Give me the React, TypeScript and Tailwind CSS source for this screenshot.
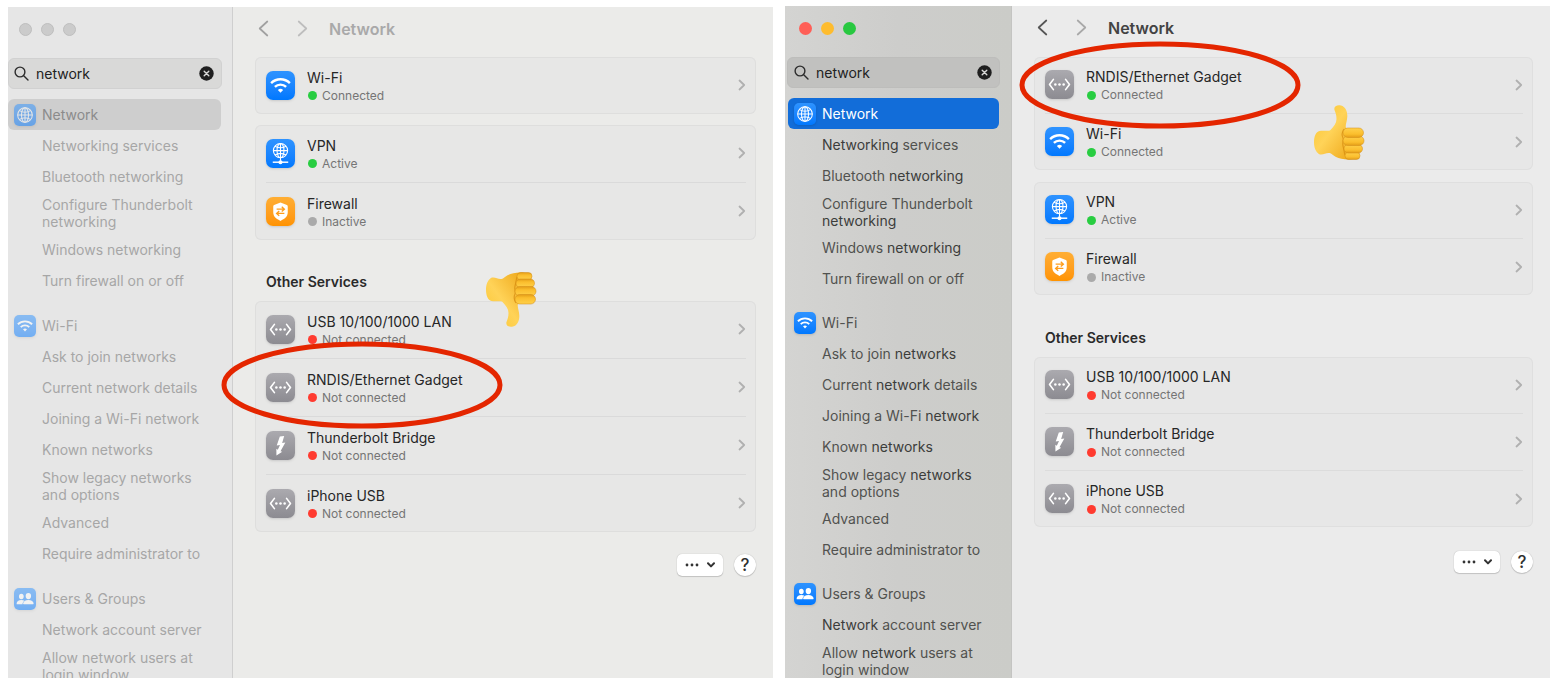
import type { ReactNode } from 'react'
import clsx from 'clsx'

type Status = 'Connected' | 'Active' | 'Inactive' | 'Not connected'
type IconKind = 'wifi' | 'vpn' | 'firewall' | 'ethernet' | 'thunderbolt' | 'globe' | 'users'

interface Service {
  name: string
  icon: IconKind
  status: Status
  circled?: boolean
}

interface SearchGroup {
  title: string
  icon: IconKind
  items: string[]
}

// Words between asterisks are the ones the search matched
const searchGroups: SearchGroup[] = [
  {
    title: 'Network',
    icon: 'globe',
    items: [
      '*Networking* services',
      'Bluetooth *networking*',
      'Configure Thunderbolt|*networking*',
      'Windows *networking*',
      'Turn firewall on or off',
    ],
  },
  {
    title: 'Wi-Fi',
    icon: 'wifi',
    items: [
      'Ask to join *networks*',
      'Current *network* details',
      'Joining a Wi-Fi *network*',
      'Known *networks*',
      'Show legacy *networks*|and options',
      'Advanced',
      'Require administrator to',
    ],
  },
  {
    title: 'Users & Groups',
    icon: 'users',
    items: ['*Network* account server', 'Allow *network* users at|login window'],
  },
]

const wifi: Service = { name: 'Wi-Fi', icon: 'wifi', status: 'Connected' }
const vpn: Service = { name: 'VPN', icon: 'vpn', status: 'Active' }
const firewall: Service = { name: 'Firewall', icon: 'firewall', status: 'Inactive' }
const lan: Service = { name: 'USB 10/100/1000 LAN', icon: 'ethernet', status: 'Not connected' }
const bridge: Service = { name: 'Thunderbolt Bridge', icon: 'thunderbolt', status: 'Not connected' }
const iphone: Service = { name: 'iPhone USB', icon: 'ethernet', status: 'Not connected' }
const gadget: Service = { name: 'RNDIS/Ethernet Gadget', icon: 'ethernet', status: 'Not connected', circled: true }

export default function App() {
  return (
    <div className="flex h-screen gap-3 bg-white pt-[6px] pr-[10px] pb-[9px] pl-2 font-['Inter','Liberation_Sans',sans-serif]">
      <SettingsWindow
        active={false}
        groups={[[wifi], [vpn, firewall]]}
        others={[lan, gadget, bridge, iphone]}
      />
      <SettingsWindow
        active
        groups={[[{ ...gadget, status: 'Connected' }, wifi], [vpn, firewall]]}
        others={[lan, bridge, iphone]}
      />
    </div>
  )
}

interface SettingsWindowProps {
  active: boolean
  groups: Service[][]
  others: Service[]
}

function SettingsWindow({ active, groups, others }: SettingsWindowProps) {
  return (
    <section
      aria-label={active ? 'Gadget connected' : 'Gadget not connected'}
      className={clsx('flex min-w-0 flex-1 overflow-hidden', !active && 'mt-px')}
    >
      <Sidebar active={active} />

      <main className={clsx('relative min-w-0 flex-1 pr-[17px] pl-[22px]', active ? 'bg-[#ebebeb]' : 'bg-[#ebebe9]')}>
        {/* Toolbar */}
        <header className={clsx('flex items-center', active ? 'h-[51px] pb-2' : 'h-[50px] pb-[7px]')}>
          <button aria-label="Back" className={clsx('ml-[3px]', active ? 'text-[#555555]' : 'text-[#a0a0a0]')}>
            <NavChevron />
          </button>
          <button aria-label="Forward" className={clsx('ml-[28px] rotate-180', active ? 'text-[#a8a8a8]' : 'text-[#bdbdbd]')}>
            <NavChevron />
          </button>
          <h1 className={clsx('ml-[21px] text-[16px] font-semibold', active ? 'text-[#434343]' : 'text-[#a9a9a9]')}>Network</h1>
        </header>

        <div className={clsx('flex flex-col', active ? 'gap-3' : 'gap-[11px]')}>
          {groups.map((services) => (
            <ServiceCard key={services[0].name} services={services} active={active} />
          ))}
        </div>

        <h2 className={clsx('pb-[9px] pl-[11px] text-[14px] leading-5 font-semibold text-[#2a2a2a]', active ? 'pt-[33px]' : 'pt-[32px]')}>
          Other Services
        </h2>
        <ServiceCard services={others} active={active} />

        <div className={clsx('flex justify-end gap-[11px]', active ? 'mt-6' : 'mt-[22px]')}>
          <button
            aria-label="More options"
            className="flex h-[22px] w-[46px] items-center justify-center gap-2 rounded-[5px] bg-white text-[#333333] shadow-[0_0_1px_rgba(0,0,0,0.3),0_1px_1px_rgba(0,0,0,0.15)]"
          >
            <svg width="14" height="4" viewBox="0 0 14 4" fill="currentColor">
              <circle cx="2" cy="2" r="1.4" />
              <circle cx="7" cy="2" r="1.4" />
              <circle cx="12" cy="2" r="1.4" />
            </svg>
            <svg width="8" height="6" viewBox="0 0 8 6" fill="none" stroke="currentColor" strokeWidth="2" strokeLinecap="round" strokeLinejoin="round">
              <path d="M1 1.3 4 4.4 7 1.3" />
            </svg>
          </button>
          <button
            aria-label="Help"
            className="h-[22px] w-[22px] rounded-full bg-white text-[17px] leading-[22px] font-medium text-[#2f2f2f] shadow-[0_0_1px_rgba(0,0,0,0.3),0_1px_1px_rgba(0,0,0,0.15)]"
          >
            ?
          </button>
        </div>

        {active ? <Thumb className="absolute top-[99px] left-[301px]" /> : <Thumb className="absolute top-[264px] left-[252px] -scale-y-100" />}
      </main>
    </section>
  )
}

function Sidebar({ active }: { active: boolean }) {
  const light = 'h-[13px] w-[13px] rounded-full'
  const dimmed = 'border border-[#bebebe] bg-[#cbcbcb]'

  return (
    <aside
      className={clsx(
        'shrink-0 border-r',
        active
          ? 'w-[227px] border-[#c4c4c2] bg-linear-to-r from-[#d4d4d2] via-[#cdcdcb] to-[#cbccc8] pr-3 pl-[3px]'
          : 'w-[225px] border-[#cfcfcf] bg-[#e6e6e6] pr-[11px]',
      )}
    >
      {/* Window controls */}
      <div className="flex h-[51px] gap-[9px] pt-[16px] pl-[11px]">
        <button aria-label="Close" className={clsx(light, active ? 'bg-[#ff5f57]' : dimmed)} />
        <button aria-label="Minimize" className={clsx(light, active ? 'bg-[#febc2e]' : dimmed)} />
        <button aria-label="Zoom" className={clsx(light, active ? 'bg-[#28c840]' : dimmed)} />
      </div>

      <label
        className={clsx(
          '-mr-px flex h-[31px] items-center rounded-md border pr-[7px]',
          active ? '-ml-px border-[#bdbdbb] bg-[#c1c1bf] pl-[6px]' : 'border-[#d1d1d1] bg-[#d9d9d8] pl-[5px]',
        )}
      >
        <svg width="15" height="15" viewBox="0 0 15 15" fill="none" stroke="#2c2c2c" strokeWidth="1.4" strokeLinecap="round">
          <circle cx="6" cy="6" r="4.9" />
          <path d="m9.7 9.7 4.3 4.3" />
        </svg>
        <input
          type="text"
          aria-label="Search"
          defaultValue="network"
          className="ml-[7px] min-w-0 flex-1 bg-transparent text-[14px] text-[#222222] outline-none"
        />
        <button aria-label="Clear search">
          <svg width="15" height="15" viewBox="0 0 15 15">
            <circle cx="7.5" cy="7.5" r="7.2" fill="#1f1f1f" />
            <path d="m5.2 5.2 4.6 4.6M9.8 5.2 5.2 9.8" stroke="#d9d9d8" strokeWidth="1.4" strokeLinecap="round" />
          </svg>
        </button>
      </label>

      <nav className={clsx('flex flex-col pt-[10px] text-[14px]', active ? 'gap-[13px] text-[#51524f]' : 'gap-[14px] text-[#a6a6a6]')}>
        {searchGroups.map((group, i) => (
          <ul key={group.title}>
            <li>
              <a
                href="#"
                className={clsx(
                  'flex h-[31px] items-center gap-[6px] rounded-md pl-[6px]',
                  i === 0 && (active ? 'bg-[#126dd9] text-white' : 'bg-[#cecece] text-[#8b8b8b]'),
                )}
              >
                <span className={clsx('flex', !active && 'opacity-50')}>
                  <ServiceIcon kind={group.icon} size={22} />
                </span>
                {group.title}
              </a>
            </li>
            {group.items.map((item) => (
              <SearchItem key={item} item={item} active={active} />
            ))}
          </ul>
        ))}
      </nav>
    </aside>
  )
}

function SearchItem({ item, active }: { item: string; active: boolean }) {
  const lines = item.split('|')

  return (
    <li>
      <a
        href="#"
        className={clsx(
          'flex flex-col justify-center pl-[34px] leading-[17px] whitespace-nowrap',
          lines.length === 1 ? 'h-[31px]' : active ? 'h-[41px]' : 'h-[42px]',
        )}
      >
        {lines.map((line) => (
          <span key={line}>
            {line.split('*').map((part, i) => (
              <span key={i} className={clsx(i % 2 === 1 && active && 'text-[#3c3d3b]')}>
                {part}
              </span>
            ))}
          </span>
        ))}
      </a>
    </li>
  )
}

function ServiceCard({ services, active }: { services: Service[]; active: boolean }) {
  return (
    <ul
      className={clsx(
        'divide-y rounded-md pr-[10px] pl-[11px] inset-ring',
        active ? 'divide-[#dcdcdc] bg-[#e7e7e7] inset-ring-[#dfdfdf]' : 'divide-[#dadada] bg-[#e7e7e6] inset-ring-[#dededd]',
      )}
    >
      {services.map((service) => (
        <li key={service.name} className="relative">
          <button className={clsx('flex w-full items-center pb-px text-left', active ? 'h-[56px]' : 'h-[57px]')}>
            <ServiceIcon kind={service.icon} size={29} />
            <span className="flex min-w-0 flex-1 flex-col pt-[3px] pl-[12px]">
              <span className="truncate text-[14px] leading-[18px] text-[#262626]">{service.name}</span>
              <span className="flex items-center gap-[5px] text-[12px] leading-[18px] text-[#757575]">
                <StatusDot status={service.status} />
                {service.status}
              </span>
            </span>
            <svg width="8" height="12" viewBox="0 0 8 12" fill="none" stroke="#b0b0b0" strokeWidth="1.8" strokeLinecap="round" strokeLinejoin="round">
              <path d="m1.5 1.5 4.7 4.5-4.7 4.5" />
            </svg>
          </button>
          {service.circled && (
            <svg
              className={clsx('pointer-events-none absolute z-10', active ? '-top-[16px] -left-[26px]' : '-top-[18px] -left-[45px]')}
              width="282"
              height="88"
              viewBox="0 0 282 88"
              fill="none"
              stroke="#e42600"
              strokeWidth="5"
            >
              <ellipse cx="141" cy="44" rx="138" ry="41" />
            </svg>
          )}
        </li>
      ))}
    </ul>
  )
}

function StatusDot({ status }: { status: Status }) {
  return (
    <span
      className={clsx(
        'ml-px h-[9px] w-[9px] rounded-full',
        status === 'Not connected' ? 'bg-[#ff3b30]' : status === 'Inactive' ? 'bg-[#aaaaaa]' : 'bg-[#28cd41]',
      )}
    />
  )
}

function NavChevron() {
  return (
    <svg width="11" height="17" viewBox="0 0 11 17" fill="none" stroke="currentColor" strokeWidth="1.7" strokeLinecap="round" strokeLinejoin="round">
      <path d="M9.3 1.5 1.7 8.5l7.6 7" />
    </svg>
  )
}

const tileColors: Record<IconKind, string> = {
  wifi: 'from-[#2e93ff] to-[#0078fe]',
  vpn: 'from-[#2e93ff] to-[#0078fe]',
  globe: 'from-[#2e93ff] to-[#0078fe]',
  users: 'from-[#2e93ff] to-[#0078fe]',
  firewall: 'from-[#ffae33] to-[#ff9300]',
  ethernet: 'from-[#abaaaf] to-[#8c8b91]',
  thunderbolt: 'from-[#abaaaf] to-[#8c8b91]',
}

// All glyphs are drawn on a 30 x 30 tile
const glyphs: Record<IconKind, ReactNode> = {
  wifi: (
    <g fill="none" stroke="#fff" strokeWidth="2.5">
      <path d="M5.3 12.6a13.8 13.8 0 0 1 19.4 0" />
      <path d="M9.2 16.5a8.2 8.2 0 0 1 11.6 0" />
      <path d="m15 22.4-2.7-2.8a3.9 3.9 0 0 1 5.4 0Z" fill="#fff" stroke="none" />
    </g>
  ),
  vpn: (
    <g fill="none" stroke="#fff" strokeWidth="1.1">
      <circle cx="15" cy="12" r="7.4" />
      <ellipse cx="15" cy="12" rx="3.6" ry="7.4" />
      <path d="M15 4.6v18M7.6 12h14.8M9.3 7.5c3.5 2 7.9 2 11.4 0M9.3 16.5c3.5-2 7.9-2 11.4 0" />
      <path d="M7 24h16" strokeWidth="1.5" />
      <circle cx="15" cy="24" r="2.1" fill="#fff" stroke="none" />
    </g>
  ),
  globe: (
    <g fill="none" stroke="#fff" strokeWidth="1.4">
      <circle cx="15" cy="15" r="10" />
      <ellipse cx="15" cy="15" rx="4.8" ry="10" />
      <path d="M15 5v20M5 15h20M7.5 9c4.6 2.8 10.4 2.8 15 0M7.5 21c4.6-2.8 10.4-2.8 15 0" />
    </g>
  ),
  users: (
    <g fill="#fff">
      <ellipse cx="10" cy="11.5" rx="3.2" ry="3.7" />
      <path d="M3.5 21.8c0-4 2.8-5.6 6.5-5.6 1.8 0 3.2.4 4.2 1.1-1.6 1-2.6 2.7-2.6 4.9H4.3c-.5 0-.8-.1-.8-.4Z" />
      <ellipse cx="19.6" cy="11" rx="3.7" ry="4.2" />
      <path d="M12.4 21.6c0-3.6 3.1-5.4 7.2-5.4s7.2 1.8 7.2 5.4c0 .4-.3.6-.8.6H13.2c-.5 0-.8-.2-.8-.6Z" />
    </g>
  ),
  firewall: (
    <g>
      <path d="m15 5.8 6.6 2.6c.6.2.9.7.9 1.3v6.1c0 4.5-3.2 6.9-7.5 8.9-4.3-2-7.5-4.4-7.5-8.9V9.7c0-.6.3-1.1.9-1.3Z" fill="#fff" />
      <path d="M11 12.6h7.5M16.3 10.2l2.7 2.4-2.7 2.4M19 17h-7.5M13.7 14.6 11 17l2.7 2.4" fill="none" stroke="#ff9d1a" strokeWidth="1.4" />
    </g>
  ),
  ethernet: (
    <g fill="none" stroke="#fff" strokeWidth="1.7" strokeLinecap="round" strokeLinejoin="round">
      <path d="M8.7 9.7 4.7 15l4 5.3M21.3 9.7l4 5.3-4 5.3" />
      <g fill="#fff" stroke="none">
        <circle cx="10.7" cy="15" r="1.3" />
        <circle cx="15" cy="15" r="1.3" />
        <circle cx="19.3" cy="15" r="1.3" />
      </g>
    </g>
  ),
  thunderbolt: <path d="m14.3 5.7 4.5-.5-2.1 7.2 3.3-.4-5 9 1.8.4-6 4-.1-7 1.5.9 2.3-4.9-3.4.6Z" fill="#fff" />,
}

function ServiceIcon({ kind, size }: { kind: IconKind; size: number }) {
  return (
    <span className={clsx('flex shrink-0 bg-linear-to-b shadow-sm', size > 24 ? 'rounded-[7px]' : 'rounded-[5px]', tileColors[kind])}>
      <svg width={size} height={size} viewBox="0 0 30 30" aria-hidden="true">
        {glyphs[kind]}
      </svg>
    </span>
  )
}

function Thumb({ className }: { className: string }) {
  return (
    <svg className={className} width="52" height="56" viewBox="0 0 52 56" aria-hidden="true">
      <defs>
        <linearGradient id="hand" x1="0" y1="0" x2="1" y2="1">
          <stop offset="0" stopColor="#fbc52d" />
          <stop offset="0.45" stopColor="#ffd358" />
          <stop offset="1" stopColor="#eda414" />
        </linearGradient>
        <linearGradient id="finger" x1="0" y1="0" x2="0" y2="1">
          <stop offset="0" stopColor="#ffd04a" />
          <stop offset="0.65" stopColor="#fbbe2d" />
          <stop offset="1" stopColor="#e39c17" />
        </linearGradient>
      </defs>
      <path
        d="M6.500 26c4-1 7.500.500 10.500-.500 4-4 6.500-7.500 6.500-11.500 0-4-1-6.500-2-9-1-3.500 2.500-5.500 6.500-4.500 4.500 1.200 6.500 6 6.300 11-.2 5-2.300 8.500-1.300 11.500l8 2-1 29c-6 1-13 0-17-2-3.500-1.800-4.500-4-7.500-4-3 0-5 2-8.500 1.500-3-1-6-5.500-6-12 0-6 2-11 5.500-11.500Z"
        fill="url(#hand)"
      />
      <path d="M31 24c-2 3-2 7-1 9s-1 5 0 8 1 6 2 9" fill="none" stroke="#d58a0c" strokeWidth="1.200" opacity="0.700" />
      <g fill="url(#finger)" stroke="#d08a16" strokeWidth="0.500">
        <rect x="32" y="47" width="15" height="7.500" rx="3.700" />
        <rect x="31" y="39.500" width="18.500" height="8.500" rx="4.200" />
        <rect x="30" y="31" width="21" height="9.500" rx="4.700" />
        <rect x="30" y="23" width="20.500" height="9.500" rx="4.700" />
      </g>
    </svg>
  )
}
